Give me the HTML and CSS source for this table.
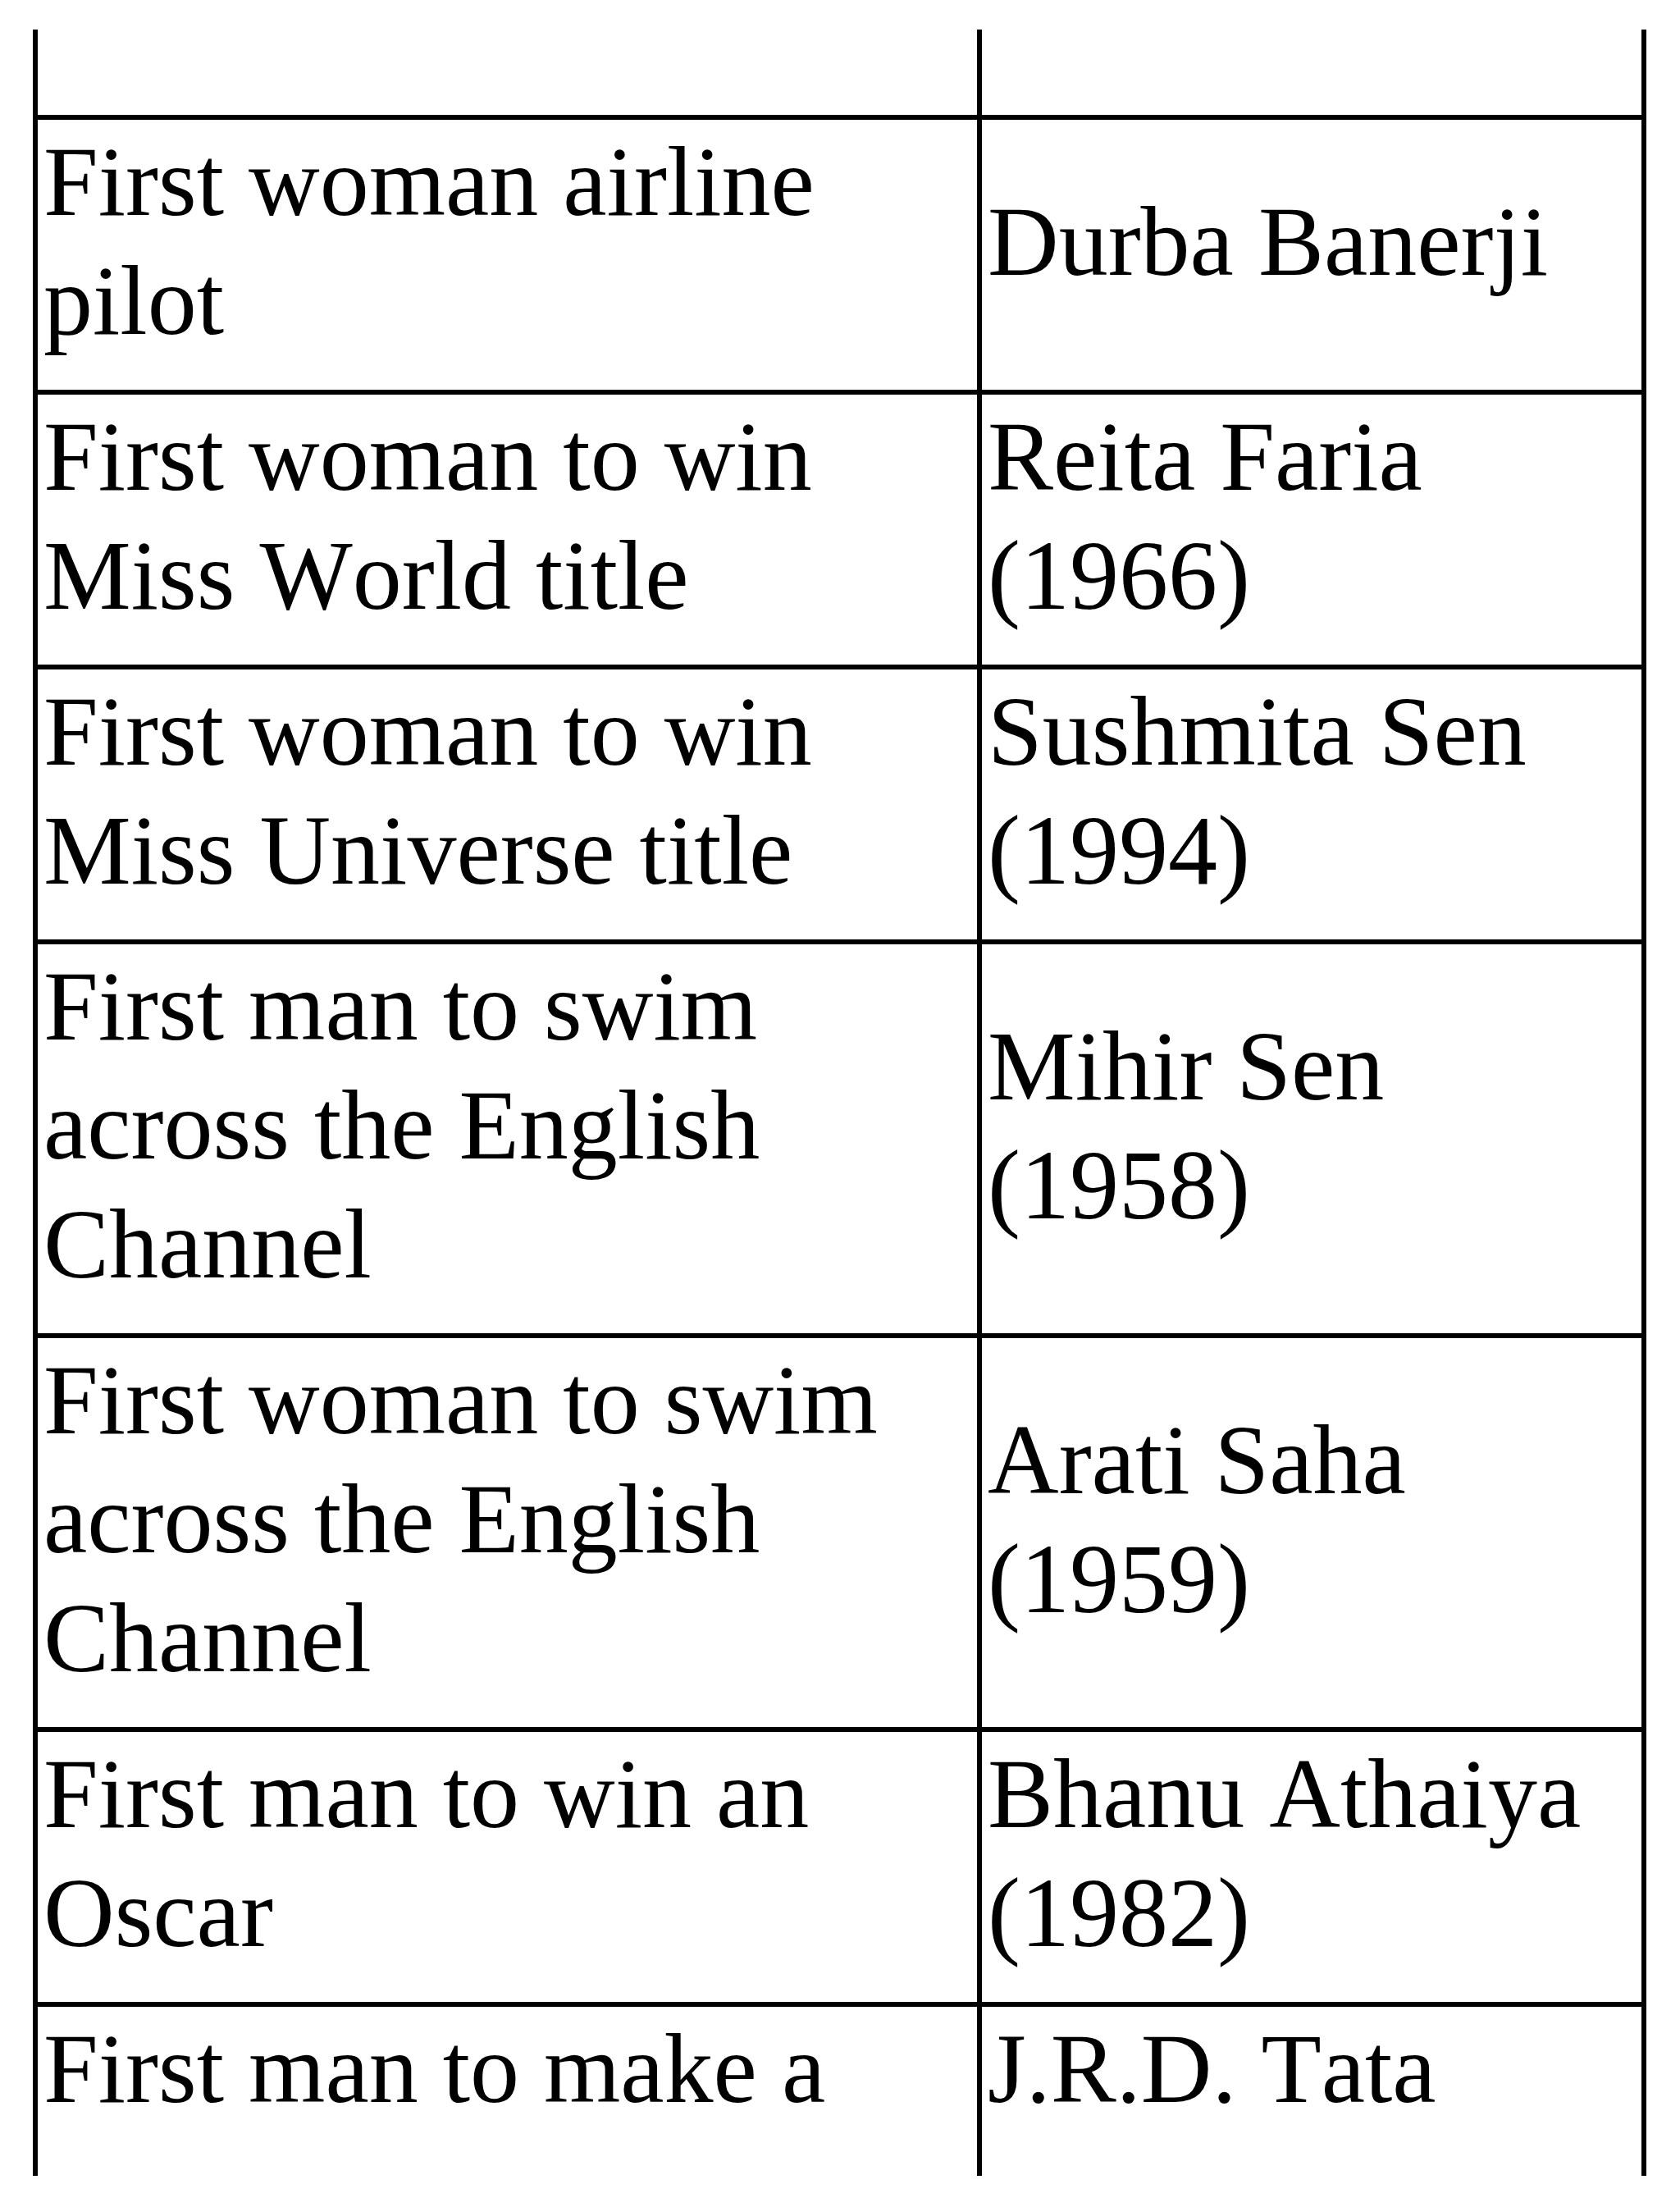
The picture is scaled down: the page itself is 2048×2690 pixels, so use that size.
FILE: index.html
```html
<!DOCTYPE html>
<html lang="en">
<head>
<meta charset="utf-8">
<title>Firsts</title>
<link rel="stylesheet" href="styles.css">
</head>
<body>
<div class="sheet">
  <div class="row row-blank">
    <div class="cell"></div>
    <div class="cell name"></div>
  </div>
  <div class="row">
    <div class="cell">First woman airline pilot</div>
    <div class="cell name">Durba Banerji</div>
  </div>
  <div class="row">
    <div class="cell">First woman to win Miss World title</div>
    <div class="cell name">Reita Faria (1966)</div>
  </div>
  <div class="row">
    <div class="cell">First woman to win Miss Universe title</div>
    <div class="cell name">Sushmita Sen (1994)</div>
  </div>
  <div class="row">
    <div class="cell">First man to swim across the English Channel</div>
    <div class="cell name">Mihir Sen (1958)</div>
  </div>
  <div class="row">
    <div class="cell">First woman to swim across the English Channel</div>
    <div class="cell name">Arati Saha (1959)</div>
  </div>
  <div class="row">
    <div class="cell">First man to win an Oscar</div>
    <div class="cell name">Bhanu Athaiya (1982)</div>
  </div>
  <div class="row row-cut">
    <div class="cell">First man to make a</div>
    <div class="cell name">J.R.D. Tata</div>
  </div>
</div>
</body>
</html>
```

FILE: styles.css
```css
html, body {
  margin: 0;
  padding: 0;
  background: #ffffff;
}

body {
  font-family: "Liberation Serif", "Times New Roman", serif;
  font-size: 120px;
  line-height: 145px;
  font-kerning: none;
  color: #000000;
}

.sheet {
  margin: 36px 0 0 40px;
  width: 1967px;
  box-sizing: border-box;
  border-left: 6px solid #000000;
  border-right: 6px solid #000000;
}

.row {
  display: grid;
  grid-template-columns: 1145px 810px;
  border-top: 6px solid #000000;
}

.cell {
  padding: 3px 7px 36px 7px;
}

.cell.name {
  border-left: 6px solid #000000;
  display: flex;
  flex-direction: column;
  justify-content: center;
}

.row-blank {
  border-top: none;
  height: 104px;
}

.row-blank .cell {
  padding: 0;
}

.row-cut {
  height: 212px;
  box-sizing: border-box;
  overflow: hidden;
}

.row-cut .cell.name {
  justify-content: flex-start;
}
```
